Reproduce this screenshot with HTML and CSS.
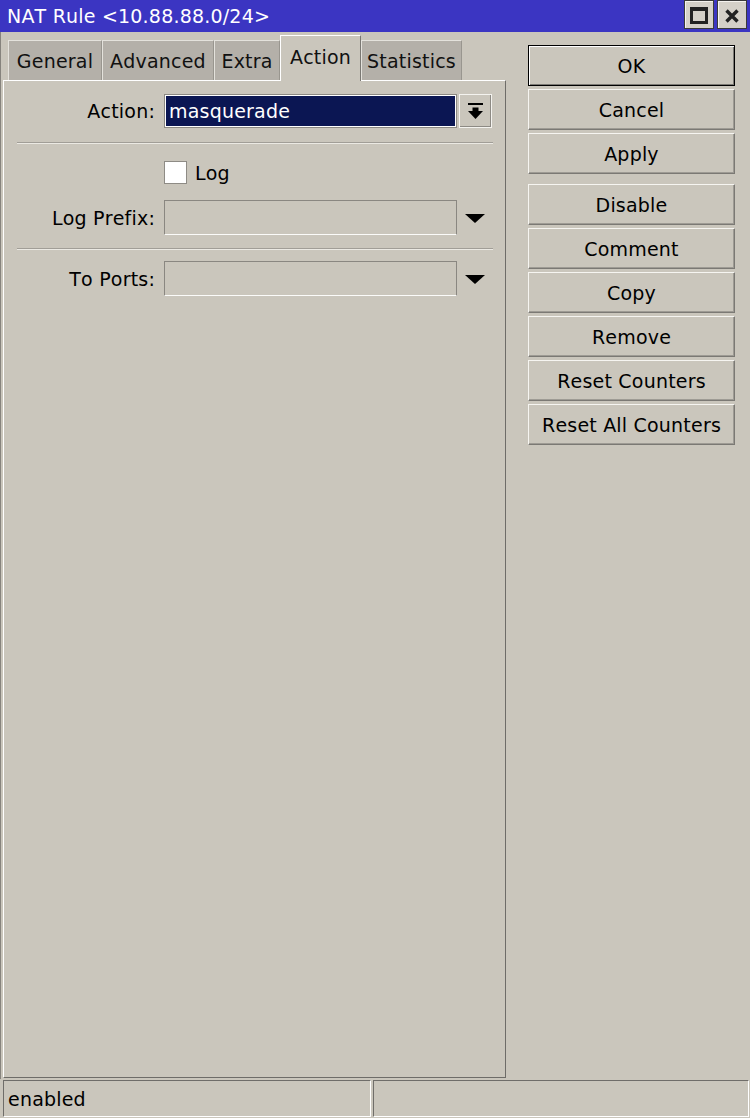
FILE: index.html
```html
<!DOCTYPE html>
<html>
<head>
<meta charset="utf-8">
<title>NAT Rule</title>
<link rel="stylesheet" href="styles.css">
</head>
<body>
<div class="window">
  <div class="titlebar">
    <span class="title">NAT Rule &lt;10.88.88.0/24&gt;</span>
    <div class="title-btns">
      <div class="tbtn tbtn-max">
        <svg width="18" height="17" viewBox="0 0 18 17"><rect x="1.5" y="1.5" width="15" height="14" fill="none" stroke="#222" stroke-width="3"/><rect x="0" y="0" width="18" height="4" fill="#222"/></svg>
      </div>
      <div class="tbtn tbtn-close">
        <svg width="14" height="14" viewBox="0 0 14 14"><path d="M1.5 1.5 L12.5 12.5 M12.5 1.5 L1.5 12.5" stroke="#222" stroke-width="3.4" fill="none"/></svg>
      </div>
    </div>
  </div>
  <div class="main">
    <div class="left">
      <div class="tabs">
        <div class="tab tab-general">General</div>
        <div class="tab tab-advanced">Advanced</div>
        <div class="tab tab-extra">Extra</div>
        <div class="tab tab-action active">Action</div>
        <div class="tab tab-statistics">Statistics</div>
      </div>
      <div class="panel">
        <div class="row row-action">
          <span class="lbl">Action:</span>
          <div class="select-input">masquerade</div>
          <div class="dd-btn">
            <svg width="15" height="16" viewBox="0 0 15 16"><rect x="0" y="0" width="15" height="2" fill="#000"/><polygon points="4.5,4.5 10.5,4.5 10.5,8 15,8 7.5,16 0,8 4.5,8" fill="#000"/></svg>
          </div>
        </div>
        <div class="sep"></div>
        <div class="row row-log">
          <span class="lbl"></span>
          <span class="checkbox"></span>
          <span class="cb-label">Log</span>
        </div>
        <div class="row row-field">
          <span class="lbl">Log Prefix:</span>
          <div class="text-input"></div>
          <div class="dd-arrow">
            <svg width="20" height="9" viewBox="0 0 20 9"><polygon points="0,0 20,0 10,9" fill="#000"/></svg>
          </div>
        </div>
        <div class="sep sep-2"></div>
        <div class="row row-field row-ports">
          <span class="lbl">To Ports:</span>
          <div class="text-input"></div>
          <div class="dd-arrow">
            <svg width="20" height="9" viewBox="0 0 20 9"><polygon points="0,0 20,0 10,9" fill="#000"/></svg>
          </div>
        </div>
      </div>
    </div>
    <div class="right">
      <div class="btn-group">
        <div class="btn btn-default">OK</div>
        <div class="btn">Cancel</div>
        <div class="btn">Apply</div>
      </div>
      <div class="btn-group">
        <div class="btn">Disable</div>
        <div class="btn">Comment</div>
        <div class="btn">Copy</div>
        <div class="btn">Remove</div>
        <div class="btn">Reset Counters</div>
        <div class="btn">Reset All Counters</div>
      </div>
    </div>
  </div>
  <div class="statusbar">
    <div class="status-box status-main">enabled</div>
    <div class="status-box status-extra"></div>
  </div>
</div>
</body>
</html>
```

FILE: styles.css
```css
* { box-sizing: border-box; }

html, body {
  margin: 0;
  padding: 0;
}

body {
  font-family: "DejaVu Sans", "Liberation Sans", sans-serif;
  font-size: 19px;
  font-kerning: none;
  letter-spacing: 0.2px;
  color: #000;
  background: #cac6bc;
}

.window {
  width: 750px;
  height: 1118px;
  display: flex;
  flex-direction: column;
  background: #cac6bc;
  overflow: hidden;
}

/* Title bar */
.titlebar {
  height: 32px;
  flex: 0 0 32px;
  background: #3b35c2;
  color: #fff;
  display: flex;
  justify-content: space-between;
  align-items: flex-start;
}

.title {
  padding: 5px 0 0 7px;
  line-height: 22px;
  white-space: nowrap;
}

.title-btns {
  display: flex;
  gap: 3px;
  padding-right: 3px;
}

.tbtn {
  width: 30px;
  height: 29px;
  background: #d4d0c8;
  border: 1px solid #3a3a3a;
  box-shadow: inset 1px 1px 0 #f4f2ee;
  display: flex;
  align-items: center;
  justify-content: center;
}

.tbtn-max svg { margin-top: 2px; }
.tbtn-close svg { margin-top: 2px; }

/* Main area */
.main {
  flex: 1;
  display: flex;
  border-left: 1px solid #86837d;
  min-height: 0;
}

.left {
  width: 503px;
  margin-left: 2px;
  display: flex;
  flex-direction: column;
  padding-bottom: 1px;
}

.tabs {
  height: 48px;
  flex: 0 0 48px;
  display: flex;
  align-items: flex-end;
  padding-left: 5px;
}

.tab {
  height: 40px;
  background: #b4b0a9;
  border-top: 1px solid #e4e2dc;
  border-left: 1px solid #e4e2dc;
  border-right: 1px solid #99968f;
  display: flex;
  align-items: center;
  justify-content: center;
  white-space: nowrap;
  color: #111;
}

.tab-general { width: 94px; }
.tab-advanced { width: 112px; }
.tab-extra { width: 66px; }
.tab-action { width: 81px; }
.tab-statistics { width: 101px; }

.tab.active {
  height: 46px;
  margin-bottom: -1px;
  background: #cac6bc;
  border-top: 1px solid #fff;
  border-left: 1px solid #fff;
  border-right: 1px solid #7a7873;
  position: relative;
  z-index: 1;
  padding-bottom: 4px;
}

.panel {
  flex: 1;
  background: #cac6bc;
  border-top: 1px solid #fff;
  border-left: 1px solid #fff;
  border-right: 1px solid #6e6c68;
  border-bottom: 1px solid #6e6c68;
  padding: 13px 12px 0 13px;
}

.row {
  display: flex;
  align-items: center;
}

.lbl {
  width: 138px;
  flex: 0 0 138px;
  text-align: right;
  margin-right: 9px;
  white-space: nowrap;
}

.row-action { height: 34px; }

.select-input {
  width: 293px;
  height: 34px;
  background: #0b1653;
  color: #fff;
  border: 1px solid #8c8983;
  box-shadow: inset 0 0 0 1px #fff;
  padding-left: 4px;
  display: flex;
  align-items: center;
}

.dd-btn {
  width: 33px;
  height: 34px;
  margin-left: 2px;
  border: 1px solid #f4f3ef;
  box-shadow: inset -1px -1px 0 #8d8a84;
  display: flex;
  align-items: center;
  justify-content: center;
}

.dd-btn svg { margin-top: -1px; }

.sep {
  margin-top: 14px;
  height: 2px;
  border-top: 1px solid #a19e97;
  border-bottom: 1px solid #ebe9e3;
}

.sep-2 { margin-top: 13px; }

.row-log {
  margin-top: 17px;
  height: 23px;
}

.checkbox {
  width: 23px;
  height: 23px;
  background: #fff;
  border: 1px solid #8e8b85;
}

.cb-label {
  margin-left: 8px;
}

.row-field {
  margin-top: 16px;
  height: 35px;
}

.row-ports { margin-top: 11px; }

.text-input {
  width: 293px;
  height: 35px;
  border: 1px solid #8a8781;
  border-bottom-color: #fbfbf9;
}

.dd-arrow {
  width: 35px;
  height: 35px;
  display: flex;
  align-items: center;
  justify-content: center;
}

.dd-arrow svg { margin-top: 1px; }

/* Right buttons */
.right {
  width: 207px;
  margin-left: 22px;
  padding-top: 13px;
  display: flex;
  flex-direction: column;
  gap: 10px;
}

.btn-group {
  display: flex;
  flex-direction: column;
  gap: 3px;
}

.btn {
  height: 41px;
  border: 1px solid #7b7974;
  border-top-color: #f6f5f1;
  border-left-color: #f6f5f1;
  box-shadow: inset -1px -1px 0 #9e9b94;
  display: flex;
  align-items: center;
  justify-content: center;
  white-space: nowrap;
}

.btn-default {
  border: 1px solid #000;
  box-shadow: inset 1px 1px 0 #fff, inset -1px -1px 0 #7b7974;
}

/* Status bar */
.statusbar {
  height: 39px;
  flex: 0 0 39px;
  display: flex;
  gap: 2px;
  padding: 1px 0 1px 3px;
}

.status-box {
  height: 37px;
  border-top: 1px solid #6f6d69;
  border-left: 1px solid #6f6d69;
  border-bottom: 1px solid #fff;
  border-right: 1px solid #fff;
  display: flex;
  align-items: center;
  padding-left: 4px;
}

.status-main { width: 368px; }
.status-extra { width: 376px; }
```
